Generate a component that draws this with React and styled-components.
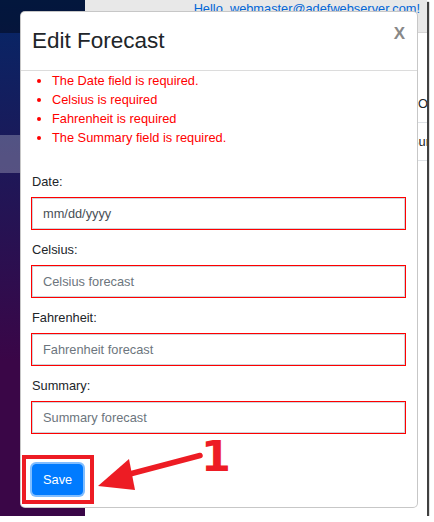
import React from 'react'
import styled, { createGlobalStyle } from 'styled-components'

const GlobalStyle = createGlobalStyle`
  html, body {
    margin: 0;
    padding: 0;
    background: #fff;
    font-family: "Liberation Sans", Arial, sans-serif;
  }
`

const fields = [
  { label: 'Date:', placeholder: 'mm/dd/yyyy', dark: true },
  { label: 'Celsius:', placeholder: 'Celsius forecast' },
  { label: 'Fahrenheit:', placeholder: 'Fahrenheit forecast' },
  { label: 'Summary:', placeholder: 'Summary forecast' },
]

const errors = [
  'The Date field is required.',
  'Celsius is required',
  'Fahrenheit is required',
  'The Summary field is required.',
]

const App = () => {
  return (
    <>
      <GlobalStyle />
      <Frame>
        <Sidebar>
          <SideTop />
          <Nav>
            <NavItem />
            <NavItem />
            <NavItem active />
          </Nav>
        </Sidebar>
        <Main>
          <TopBar>
            <UserLink href="/">Hello, webmaster@adefwebserver.com!</UserLink>
          </TopBar>
          <Table>
            <TableRow indent={333}>Options</TableRow>
            <TableRow indent={325}>Summary</TableRow>
          </Table>
        </Main>

        <Modal>
          <ModalHeader>
            <Title>Edit Forecast</Title>
            <Close>X</Close>
          </ModalHeader>
          <ModalBody>
            <Errors>
              {errors.map((e) => (
                <li key={e}>{e}</li>
              ))}
            </Errors>
            {fields.map((f) => (
              <Group key={f.label}>
                <Label>{f.label}</Label>
                <Input placeholder={f.placeholder} $dark={f.dark} />
              </Group>
            ))}
            <Footer>
              <SaveButton>Save</SaveButton>
            </Footer>
          </ModalBody>
        </Modal>

        <Annotation viewBox="0 0 427 516" width="427" height="516">
          <rect x="24" y="457" width="68" height="45" fill="none" stroke="#ed1c24" strokeWidth="4" />
          <line x1="200" y1="455.5" x2="126" y2="475" stroke="#ed1c24" strokeWidth="5.5" strokeLinecap="round" />
          <polygon points="98,486 129,459 135,490" fill="#ed1c24" />
          <text x="201" y="471" fill="#ed1c24" fontFamily="DejaVu Sans, sans-serif" fontWeight="700" fontSize="43">
            1
          </text>
        </Annotation>
      </Frame>
    </>
  )
}

export default App

const Frame = styled.div`
  position: relative;
  display: flex;
  width: 427px;
  height: 516px;
  overflow: hidden;
  box-shadow: 2px 2px 1px rgba(0, 0, 0, 0.75);
`

const Sidebar = styled.div`
  width: 85px;
  flex-shrink: 0;
  display: flex;
  flex-direction: column;
  background-image: linear-gradient(180deg, rgb(5, 39, 103) 0%, #3a0647 70%);
`

const SideTop = styled.div`
  height: 33px;
  background: rgba(0, 0, 0, 0.4);
`

const Nav = styled.div`
  padding-top: 26px;
  display: flex;
  flex-direction: column;
`

const NavItem = styled.div`
  height: 38px;
  background: ${(p) => (p.active ? 'rgba(255, 255, 255, 0.25)' : 'transparent')};
`

const Main = styled.div`
  flex: 1;
  min-width: 0;
  overflow: hidden;
  display: flex;
  flex-direction: column;
  background: #fff;
`

const TopBar = styled.div`
  height: 33px;
  display: flex;
  justify-content: flex-end;
  align-items: flex-start;
  padding: 1px 7px 0 0;
  box-sizing: border-box;
  background: #e8e8e8;
  border-bottom: 1px solid #d6d5d5;
`

const UserLink = styled.a`
  font-size: 12.8px;
  line-height: 16px;
  color: #0366d6;
  text-decoration: none;
  white-space: nowrap;
`

const Table = styled.div`
  padding-top: 52px;
  display: flex;
  flex-direction: column;
`

const TableRow = styled.div`
  height: 37px;
  line-height: 37px;
  font-size: 12.8px;
  color: #212529;
  white-space: nowrap;
  padding-left: ${(p) => p.indent}px;
  border-bottom: 1px solid #dee2e6;
`

const Modal = styled.div`
  position: absolute;
  left: 20px;
  top: 11px;
  width: 398px;
  box-sizing: border-box;
  background: #fff;
  border: 1px solid rgba(0, 0, 0, 0.22);
  border-radius: 5px;
`

const ModalHeader = styled.div`
  display: flex;
  justify-content: space-between;
  align-items: flex-start;
  padding: 15px 12px 16px 11px;
  border-bottom: 1px solid #dcdcdc;
`

const Title = styled.h5`
  margin: 0;
  font-size: 22.5px;
  line-height: 27px;
  font-weight: 400;
  color: #212529;
`

const Close = styled.span`
  margin-top: -3px;
  font-size: 17px;
  line-height: 20px;
  font-weight: 700;
  color: #888;
`

const ModalBody = styled.div`
  padding: 0 11px 12px 10px;
`

const Errors = styled.ul`
  margin: 0 0 27px 0;
  padding-left: 21px;
  color: red;
  font-size: 12.8px;
  line-height: 19px;
`

const Group = styled.div`
  margin-bottom: 12px;
`

const Label = styled.label`
  display: block;
  padding-left: 1px;
  font-size: 12.8px;
  line-height: 16px;
  color: #212529;
  margin-bottom: 7px;
`

const Input = styled.input`
  display: block;
  width: 100%;
  height: 33px;
  box-sizing: border-box;
  margin: 0;
  padding: 0 11px;
  font-family: "Liberation Sans", Arial, sans-serif;
  font-size: 12.8px;
  border: 1px solid #ff0000;
  border-radius: 0;
  box-shadow: inset 0 0 0 1px #ced4da;
  outline: none;
  background: #fff;

  &::placeholder {
    color: ${(p) => (p.$dark ? '#495057' : '#6c757d')};
  }
`

const Footer = styled.div`
  padding: 18px 0 0 1px;
  display: flex;
`

const SaveButton = styled.button`
  height: 31px;
  padding: 0 10px;
  font-family: "Liberation Sans", Arial, sans-serif;
  font-size: 12.8px;
  color: #fff;
  background: #007bff;
  border: 1px solid #007bff;
  border-radius: 4px;
  box-shadow: 0 0 0 2px rgba(0, 123, 255, 0.5);
`

const Annotation = styled.svg`
  position: absolute;
  left: 0;
  top: 0;
  pointer-events: none;
`
